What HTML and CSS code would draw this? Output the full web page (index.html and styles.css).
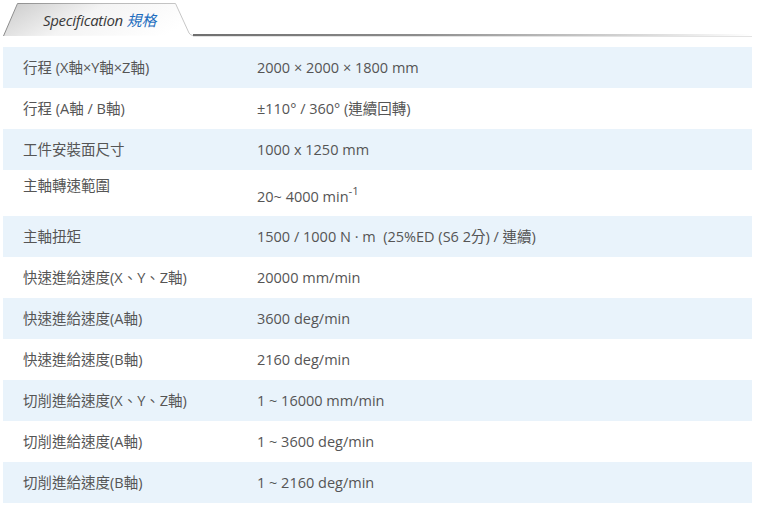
FILE: index.html
```html
<!DOCTYPE html>
<html lang="zh-Hant">
<head>
<meta charset="utf-8">
<title>Specification 規格</title>
<link rel="stylesheet" href="styles.css">
</head>
<body>
<div class="spec">
  <div class="tabbar">
    <div class="tab">
      <svg class="tab-bg" width="190" height="34" viewBox="0 0 190 34" aria-hidden="true">
        <defs>
          <linearGradient id="tabfill" x1="0" y1="0.2" x2="1" y2="0.5">
            <stop offset="0" stop-color="#cfcfcf"/>
            <stop offset="0.45" stop-color="#f4f4f4"/>
            <stop offset="1" stop-color="#ffffff"/>
          </linearGradient>
          <linearGradient id="tabstroke" x1="0" y1="0" x2="1" y2="0">
            <stop offset="0" stop-color="#8a8a8a"/>
            <stop offset="0.5" stop-color="#b8b8b8"/>
            <stop offset="1" stop-color="#c8c8c8"/>
          </linearGradient>
        </defs>
        <path d="M0.5 33 L14.5 0.5 L172.5 0.5 L186 30 Q187.5 32.5 190 32.5" fill="url(#tabfill)" stroke="url(#tabstroke)" stroke-width="1"/>
      </svg>
      <span class="tab-label">Specification <span class="tab-zh">規格</span></span>
    </div>
    <div class="tab-line"></div>
  </div>

  <div class="rows">
    <div class="row alt"><div class="label">行程 (X軸×Y軸×Z軸)</div><div class="value">2000 × 2000 × 1800 mm</div></div>
    <div class="row"><div class="label">行程 (A軸 / B軸)</div><div class="value">±110° / 360° (連續回轉)</div></div>
    <div class="row alt"><div class="label">工件安裝面尺寸</div><div class="value">1000 x 1250 mm</div></div>
    <div class="row tall"><div class="label">主軸轉速範圍</div><div class="value">20~ 4000 min<sup>-1</sup></div></div>
    <div class="row alt"><div class="label">主軸扭矩</div><div class="value">1500 / 1000 N · m &nbsp;(25%ED (S6 2分) / 連續)</div></div>
    <div class="row"><div class="label">快速進給速度(X、Y、Z軸)</div><div class="value">20000 mm/min</div></div>
    <div class="row alt"><div class="label">快速進給速度(A軸)</div><div class="value">3600 deg/min</div></div>
    <div class="row"><div class="label">快速進給速度(B軸)</div><div class="value">2160 deg/min</div></div>
    <div class="row alt"><div class="label">切削進給速度(X、Y、Z軸)</div><div class="value">1 ~ 16000 mm/min</div></div>
    <div class="row"><div class="label">切削進給速度(A軸)</div><div class="value">1 ~ 3600 deg/min</div></div>
    <div class="row alt"><div class="label">切削進給速度(B軸)</div><div class="value">1 ~ 2160 deg/min</div></div>
  </div>
</div>
</body>
</html>
```

FILE: styles.css
```css
html, body {
  margin: 0;
  padding: 0;
  background: #ffffff;
}

body {
  font-family: "Open Sans", "Noto Sans CJK TC", sans-serif;
  color: #555555;
}

.spec {
  width: 749px;
  margin: 3px 0 0 3px;
}

.tabbar {
  display: flex;
  align-items: flex-end;
  height: 34px;
}

.tab {
  position: relative;
  width: 190px;
  height: 34px;
  flex: none;
}

.tab-bg {
  position: absolute;
  left: 0;
  top: 0;
}

.tab-label {
  position: relative;
  display: block;
  padding: 7px 0 0 40px;
  font-size: 15px;
  line-height: 20px;
  font-style: italic;
  color: #3a3a3a;
  letter-spacing: -0.3px;
}

.tab-zh {
  color: #1f6fbf;
  font-style: italic;
  letter-spacing: 0;
}

.tab-line {
  flex: 1;
  height: 2px;
  margin-bottom: 1px;
  background: linear-gradient(to right, #6f6f6f 0%, #8c8c8c 40%, #d8d8d8 80%, rgba(255,255,255,0) 100%);
  box-shadow: 0 1px 0 rgba(200,200,200,0.5);
}

.rows {
  margin-top: 10px;
  display: flex;
  flex-direction: column;
}

.row {
  display: grid;
  grid-template-columns: 254px 1fr;
  align-items: center;
  height: 41px;
  font-size: 14.5px;
  line-height: 20px;
}

.row.alt {
  background: #e9f3fb;
}

.label {
  padding-left: 20px;
}

.value {
  padding-top: 1px;
}

.row.tall {
  height: 46px;
  align-items: start;
}

.row.tall .label {
  padding-top: 6px;
}

.row.tall .value {
  padding-top: 17px;
}

sup {
  font-size: 11.5px;
  line-height: 0;
  vertical-align: 7px;
}
```
